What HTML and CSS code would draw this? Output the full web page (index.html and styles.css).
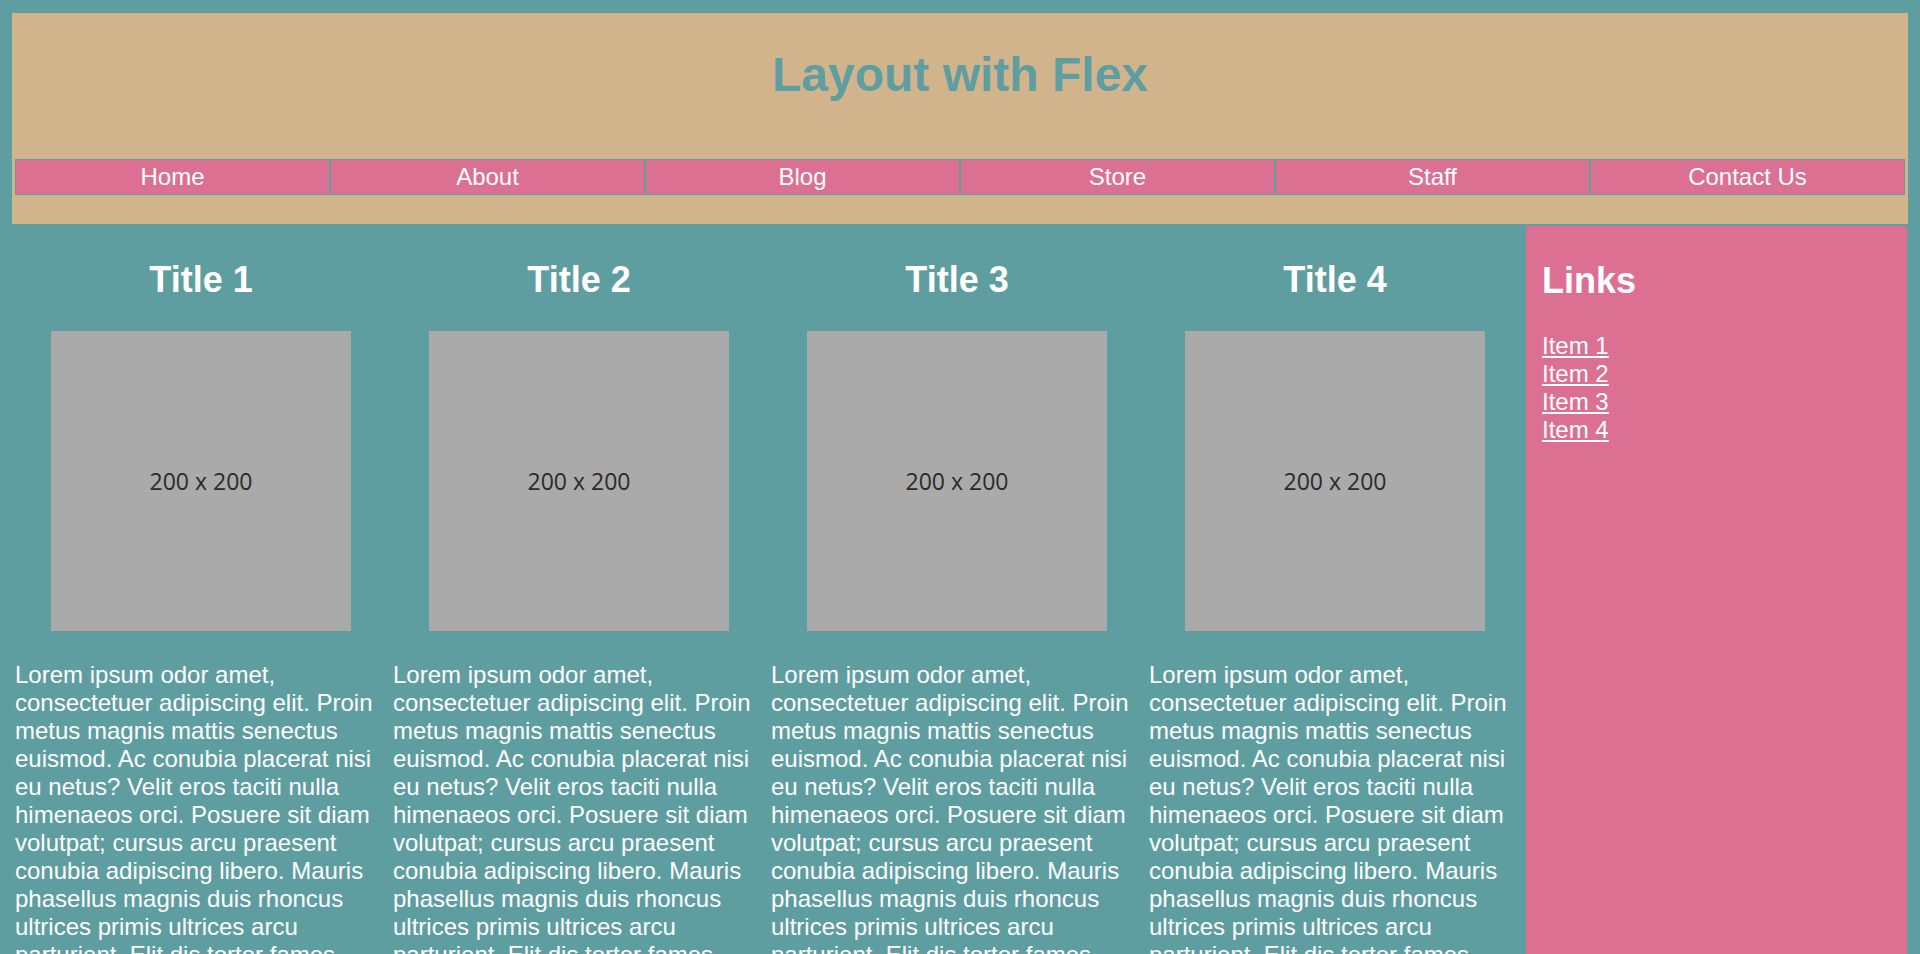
FILE: index.html
```html
<!DOCTYPE html>
<html>
	<head>
		<title>Layout with Flex</title>
		<meta charset="utf-8">
		<link rel="stylesheet" href="styles.css">
	</head>
	<body>
		<header>
			<h1>Layout with Flex</h1>
			<nav>
				<a href="#">Home</a>
				<a href="#">About</a>
				<a href="#">Blog</a>
				<a href="#">Store</a>
				<a href="#">Staff</a>
				<a href="#">Contact Us</a>
			</nav>
		</header>
		<main>
			<div class="col">
				<h2>Title 1</h2>
				<div class="pic"><svg width="300" height="300" viewBox="0 0 300 300"><rect width="300" height="300" fill="#aaa"/><text x="150" y="159" text-anchor="middle">200 x 200</text></svg></div>
				<p>Lorem ipsum odor amet, consectetuer adipiscing elit. Proin metus magnis mattis senectus euismod. Ac conubia placerat nisi eu netus? Velit eros taciti nulla himenaeos orci. Posuere sit diam volutpat; cursus arcu praesent conubia adipiscing libero. Mauris phasellus magnis duis rhoncus ultrices primis ultrices arcu parturient. Elit dis tortor fames nunc sociosqu.</p>
			</div>
			<div class="col">
				<h2>Title 2</h2>
				<div class="pic"><svg width="300" height="300" viewBox="0 0 300 300"><rect width="300" height="300" fill="#aaa"/><text x="150" y="159" text-anchor="middle">200 x 200</text></svg></div>
				<p>Lorem ipsum odor amet, consectetuer adipiscing elit. Proin metus magnis mattis senectus euismod. Ac conubia placerat nisi eu netus? Velit eros taciti nulla himenaeos orci. Posuere sit diam volutpat; cursus arcu praesent conubia adipiscing libero. Mauris phasellus magnis duis rhoncus ultrices primis ultrices arcu parturient. Elit dis tortor fames nunc sociosqu.</p>
			</div>
			<div class="col">
				<h2>Title 3</h2>
				<div class="pic"><svg width="300" height="300" viewBox="0 0 300 300"><rect width="300" height="300" fill="#aaa"/><text x="150" y="159" text-anchor="middle">200 x 200</text></svg></div>
				<p>Lorem ipsum odor amet, consectetuer adipiscing elit. Proin metus magnis mattis senectus euismod. Ac conubia placerat nisi eu netus? Velit eros taciti nulla himenaeos orci. Posuere sit diam volutpat; cursus arcu praesent conubia adipiscing libero. Mauris phasellus magnis duis rhoncus ultrices primis ultrices arcu parturient. Elit dis tortor fames nunc sociosqu.</p>
			</div>
			<div class="col">
				<h2>Title 4</h2>
				<div class="pic"><svg width="300" height="300" viewBox="0 0 300 300"><rect width="300" height="300" fill="#aaa"/><text x="150" y="159" text-anchor="middle">200 x 200</text></svg></div>
				<p>Lorem ipsum odor amet, consectetuer adipiscing elit. Proin metus magnis mattis senectus euismod. Ac conubia placerat nisi eu netus? Velit eros taciti nulla himenaeos orci. Posuere sit diam volutpat; cursus arcu praesent conubia adipiscing libero. Mauris phasellus magnis duis rhoncus ultrices primis ultrices arcu parturient. Elit dis tortor fames nunc sociosqu.</p>
			</div>
			<aside>
				<h2>Links</h2>
				<ul>
					<li><a href="#">Item 1</a></li>
					<li><a href="#">Item 2</a></li>
					<li><a href="#">Item 3</a></li>
					<li><a href="#">Item 4</a></li>
				</ul>
			</aside>
		</main>
	</body>
</html>
```

FILE: styles.css
```css
html{
	overflow:hidden;
}
body{
	margin:13px 12px 0 12px;
	background-color:#5F9EA0;
	color:white;
	font-family:"Liberation Sans", Arial, sans-serif;
	font-size:24px;
}
header{
	background-color:#D2B48C;
	padding:3px;
}
h1{
	margin:31px 0 0 0;
	font-size:48px;
	text-align:center;
	color:#5F9EA0;
}
nav{
	display:flex;
	margin:57px 0 26px 0;
}
nav a{
	flex:1;
	background-color:#DB7093;
	border:1px solid #5F9EA0;
	padding:3px 0;
	text-align:center;
	color:white;
	text-decoration:none;
}
main{
	display:grid;
	grid-template-columns:repeat(4, 1fr) 384px;
	margin-top:2px;
}
h2{
	font-size:36px;
	margin:30px 0;
}
.col{
	padding:3px;
}
.col h2{
	text-align:center;
}
.pic{
	text-align:center;
}
.pic text{
	font-family:"Open Sans", sans-serif;
	font-size:23px;
	fill:#2b2b2b;
}
.col p{
	margin:24px 0;
}
aside{
	background-color:#DB7093;
	margin:0 1px 0 2px;
	padding:4px 16px;
}
aside ul{
	list-style:none;
	margin:0;
	padding:0;
}
aside a{
	color:white;
}
```
